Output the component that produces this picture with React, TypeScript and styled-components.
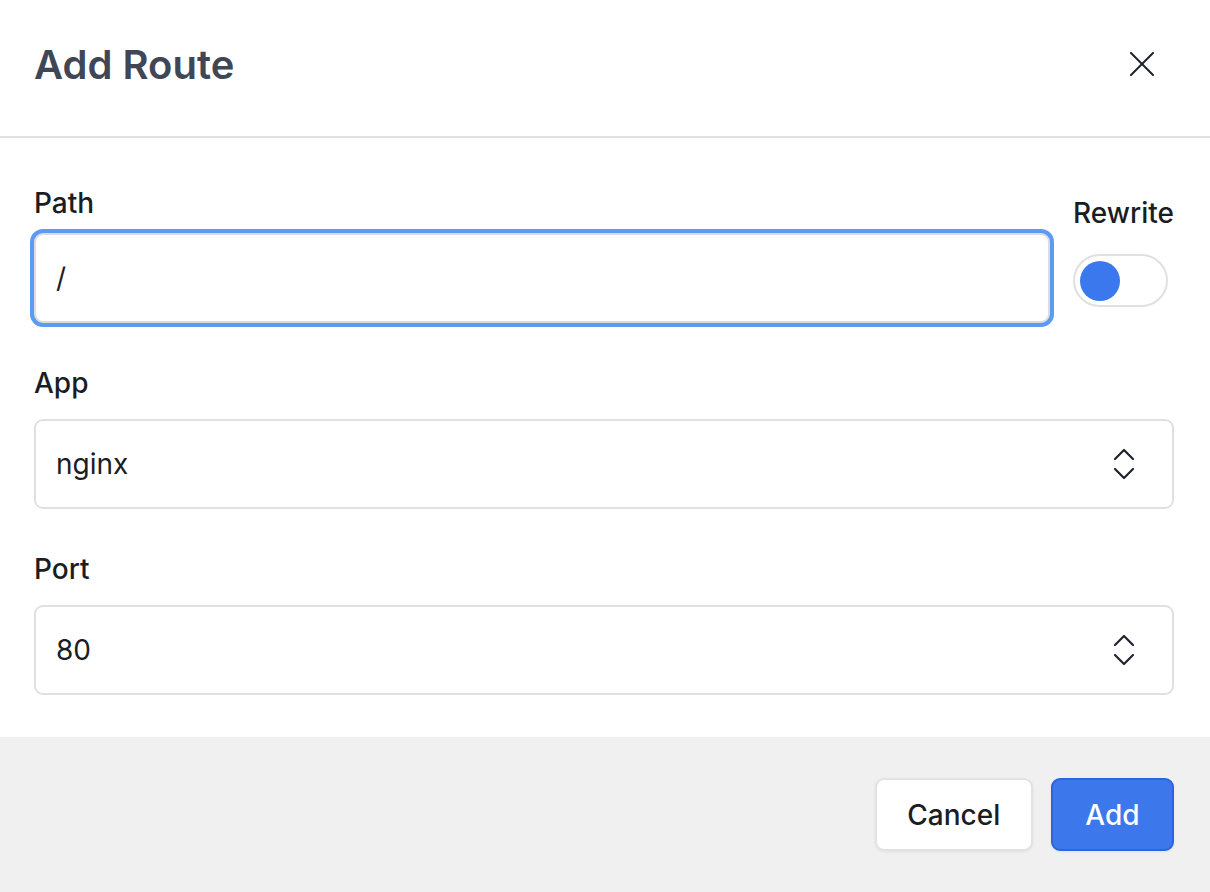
import React from "react";
import styled, { createGlobalStyle } from "styled-components";

const Global = createGlobalStyle`
  html, body { margin: 0; padding: 0; background: #ffffff; }
  body { font-family: Inter, "Noto Sans", sans-serif; -webkit-font-smoothing: antialiased; }
  * { box-sizing: border-box; }
`;

const Modal = styled.div`
  width: 1210px;
  height: 892px;
  display: flex;
  flex-direction: column;
  background: #ffffff;
  overflow: hidden;
`;

const Header = styled.header`
  height: 138px;
  flex-shrink: 0;
  padding: 45px 48px 0 34px;
  display: flex;
  align-items: flex-start;
  justify-content: space-between;
  border-bottom: 2px solid #e0e0e0;
`;

const Title = styled.h1`
  margin: 0;
  font-size: 40px;
  line-height: 40px;
  font-weight: 600;
  color: #3f4756;
  letter-spacing: 0;
`;

const CloseButton = styled.button`
  width: 40px;
  height: 40px;
  margin-top: -1px;
  border: none;
  background: transparent;
  padding: 0;
  display: flex;
  align-items: center;
  justify-content: center;
  color: #1e2230;
  cursor: pointer;
`;

const Body = styled.div`
  flex: 1;
  padding: 45px 36px 0 34px;
  display: flex;
  flex-direction: column;
  gap: 40px;
`;

const Row = styled.div`
  display: flex;
  gap: 23px;
  align-items: flex-start;
`;

const Field = styled.div<{ $width?: number; $padTop?: number }>`
  display: flex;
  flex-direction: column;
  ${(p) => (p.$width ? `width: ${p.$width}px; flex-shrink: 0;` : "flex: 1 1 auto;")}
  padding-top: ${(p) => p.$padTop ?? 0}px;
`;

const Label = styled.label<{ $gap: number }>`
  display: block;
  font-size: 28px;
  line-height: 40px;
  font-weight: 500;
  color: #1a1d23;
  margin-bottom: ${(p) => p.$gap}px;
  white-space: nowrap;
`;

const TextInput = styled.input`
  height: 90px;
  width: 100%;
  border: 2px solid #dcdcdc;
  border-radius: 9px;
  padding: 0 20px;
  font-family: Inter, "Noto Sans", sans-serif;
  font-size: 28px;
  color: #1a1d23;
  background: #ffffff;
  outline: none;
  box-shadow: 0 0 0 4px #5c9bf3;
`;

const SelectBox = styled.div`
  height: 90px;
  border: 2px solid #e0e0e0;
  border-radius: 9px;
  padding: 0 36px 0 20px;
  display: flex;
  align-items: center;
  justify-content: space-between;
  font-size: 28px;
  color: #1a1d23;
  background: #ffffff;
`;

const Toggle = styled.div`
  width: 95px;
  height: 53px;
  border: 2px solid #e0e0e0;
  border-radius: 999px;
  padding: 5px;
  background: #ffffff;
  display: flex;
  align-items: center;
`;

const Knob = styled.span`
  width: 40px;
  height: 40px;
  border-radius: 50%;
  background: #3b78ed;
`;

const Footer = styled.footer`
  height: 155px;
  flex-shrink: 0;
  background: #f0f0f0;
  padding: 41px 36px;
  display: flex;
  justify-content: flex-end;
  gap: 18px;
`;

const Button = styled.button<{ $primary?: boolean }>`
  height: 73px;
  padding: 0 ${(p) => (p.$primary ? 32.5 : 30.5)}px;
  border-radius: 9px;
  font-family: Inter, "Noto Sans", sans-serif;
  font-size: 28px;
  font-weight: 500;
  cursor: pointer;
  border: 2px solid ${(p) => (p.$primary ? "#2f64e0" : "#e2e2e2")};
  background: ${(p) => (p.$primary ? "#3c78eb" : "#ffffff")};
  color: ${(p) => (p.$primary ? "#ffffff" : "#1a1d23")};
  box-shadow: 0 1px 3px rgba(0, 0, 0, 0.06);
`;

const Chevrons = () => (
  <svg width="24" height="34" viewBox="0 0 24 34" fill="none" stroke="#1f2430" strokeWidth="2.2" strokeLinecap="round" strokeLinejoin="round">
    <polyline points="3,12 12,3 21,12" />
    <polyline points="3,22 12,31 21,22" />
  </svg>
);

const CloseIcon = () => (
  <svg width="24" height="24" viewBox="0 0 24 24" fill="none" stroke="currentColor" strokeWidth="2" strokeLinecap="round">
    <line x1="1" y1="1" x2="23" y2="23" />
    <line x1="23" y1="1" x2="1" y2="23" />
  </svg>
);

export default function App() {
  return (
    <>
      <Global />
      <Modal>
        <Header>
          <Title>Add Route</Title>
          <CloseButton aria-label="Close">
            <CloseIcon />
          </CloseButton>
        </Header>
        <Body>
          <Row>
            <Field>
              <Label $gap={10}>Path</Label>
              <TextInput defaultValue="/" readOnly />
            </Field>
            <Field $width={101} $padTop={10}>
              <Label $gap={21}>Rewrite</Label>
              <Toggle>
                <Knob />
              </Toggle>
            </Field>
          </Row>
          <div>
            <Label $gap={16}>App</Label>
            <SelectBox>
              <span>nginx</span>
              <Chevrons />
            </SelectBox>
          </div>
          <div>
            <Label $gap={16}>Port</Label>
            <SelectBox>
              <span>80</span>
              <Chevrons />
            </SelectBox>
          </div>
        </Body>
        <Footer>
          <Button>Cancel</Button>
          <Button $primary>Add</Button>
        </Footer>
      </Modal>
    </>
  );
}
